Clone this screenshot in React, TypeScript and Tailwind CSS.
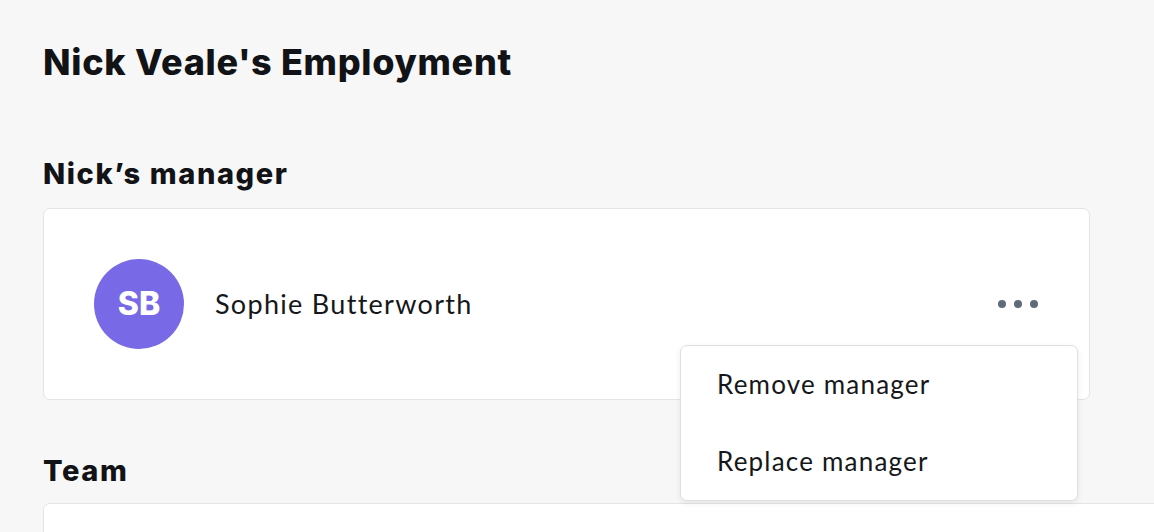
import React from "react";

export default function App() {
  return (
    <div
      className="w-full h-[532px] overflow-hidden bg-[#f7f7f7] text-[#111316]"
      style={{ fontFamily: "Inter, 'Noto Sans', sans-serif" }}
    >
      <div className="pl-[43px] pt-[40px]">
        <h1 className="text-[36px] leading-[44px] font-extrabold tracking-[0.7px]">
          Nick Veale's Employment
        </h1>
        <h2 className="mt-[72px] text-[29px] leading-[36px] font-extrabold tracking-[1.6px]">
          Nick’s manager
        </h2>
        <div className="relative mt-[16px] w-[1047px] h-[192px] bg-white border border-[#e4e4e4] rounded-[7px] flex items-center pl-[50px] pr-[50px]">
          <div className="w-[90px] h-[90px] rounded-full bg-[#786ae6] flex items-center justify-center text-white text-[32px] font-extrabold">
            SB
          </div>
          <div
            className="ml-[31px] text-[27px] tracking-[1.3px] text-[#15171a]"
            style={{ fontFamily: "Lato, 'Noto Sans', sans-serif" }}
          >
            Sophie Butterworth
          </div>
          <div className="ml-auto flex items-center gap-[8px] mr-[1px]">
            <span className="w-[8px] h-[8px] rounded-full bg-[#5f6b7b]" />
            <span className="w-[8px] h-[8px] rounded-full bg-[#5f6b7b]" />
            <span className="w-[8px] h-[8px] rounded-full bg-[#5f6b7b]" />
          </div>
          <div
            className="absolute left-[636px] top-[136px] w-[398px] h-[156px] bg-white border border-[#e0e0e0] rounded-[7px] shadow-[0_2px_6px_rgba(0,0,0,0.08)] flex flex-col justify-center pl-[36px] text-[26px] tracking-[1.2px] text-[#15171a] z-10"
            style={{ fontFamily: "Lato, 'Noto Sans', sans-serif" }}
          >
            <div className="h-[78px] flex items-center">Remove manager</div>
            <div className="h-[78px] flex items-center">Replace manager</div>
          </div>
        </div>
        <h2 className="mt-[53px] text-[29px] leading-[36px] font-extrabold tracking-[1.6px]">Team</h2>
        <div className="mt-[14px] w-[1200px] h-[100px] bg-white border border-[#e4e4e4] rounded-[7px]" />
      </div>
    </div>
  );
}
